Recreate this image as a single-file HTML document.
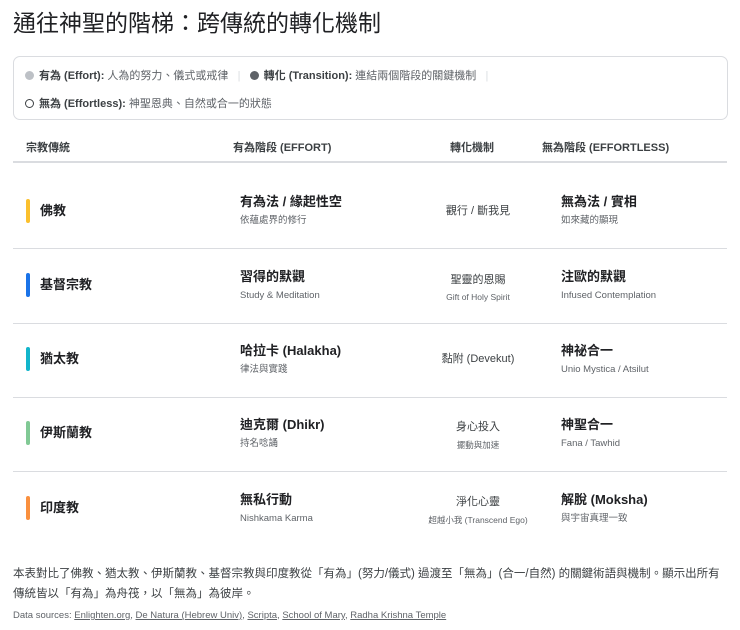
<!DOCTYPE html>
<html><head><meta charset="utf-8"><style>
body{margin:0;width:740px;height:630px;background:#fff;font-family:"Liberation Sans","Noto Sans CJK TC",sans-serif;color:#202124;position:relative;overflow:hidden}
.a{position:absolute;white-space:nowrap}
h1{position:absolute;left:13px;top:4px;margin:0;font-size:23px;font-weight:400;color:#202124;font-family:"Liberation Sans","Noto Sans CJK TC",sans-serif}
.leg{position:absolute;left:13px;top:56px;width:713px;height:62px;border:1px solid #dadce0;border-radius:7px}
.lt{font-size:11px;color:#5f6368}
.lt b{color:#3c4043;font-weight:700}
.dot{display:inline-block;width:9px;height:9px;border-radius:50%;vertical-align:-1px;margin-right:5px}
.hd{font-size:11px;font-weight:700;color:#3c4043;top:139px}
.line{position:absolute;left:13px;width:714px;height:1px;background:#dadce0}
.bar{position:absolute;left:26px;width:4px;height:24px;border-radius:2px}
.nm{font-size:13px;font-weight:700;left:40px;line-height:16px}
.mn{font-size:13px;font-weight:700;color:#202124;line-height:16px}
.sb{font-size:9.5px;color:#5f6368;line-height:12px}
.tr{font-size:11px;color:#3c4043;text-align:center;width:120px;left:418px;line-height:14px}
.ts{font-size:8.5px;color:#5f6368;text-align:center;width:160px;left:398px;line-height:11px}
</style></head><body>
<h1>通往神聖的階梯：跨傳統的轉化機制</h1>
<div class="leg">
<div class="a lt" style="left:11px;top:10px"><span class="dot" style="background:#bdc1c6"></span><b>有為 (Effort):</b> 人為的努力、儀式或戒律 &nbsp;&nbsp;<span style="color:#dadce0">|</span>&nbsp;&nbsp; <span class="dot" style="background:#5f6368"></span><b>轉化 (Transition):</b> 連結兩個階段的關鍵機制 &nbsp;&nbsp;<span style="color:#dadce0">|</span></div>
<div class="a lt" style="left:11px;top:38px"><span class="dot" style="border:1.5px solid #3c4043;width:7px;height:7px"></span><b>無為 (Effortless):</b> 神聖恩典、自然或合一的狀態</div>
</div>
<div class="a hd" style="left:26px">宗教傳統</div>
<div class="a hd" style="left:233px">有為階段 (EFFORT)</div>
<div class="a hd" style="left:450px">轉化機制</div>
<div class="a hd" style="left:542px">無為階段 (EFFORTLESS)</div>
<div class="line" style="top:161px;height:2px"></div>

<div class="bar" style="top:199px;background:#fbc02d"></div>
<div class="a nm" style="top:203px">佛教</div>
<div class="a mn" style="left:240px;top:194px">有為法 / 緣起性空</div>
<div class="a sb" style="left:240px;top:215px">依蘊處界的修行</div>
<div class="a tr" style="top:204px">觀行 / 斷我見</div>
<div class="a mn" style="left:561px;top:194px">無為法 / 實相</div>
<div class="a sb" style="left:561px;top:215px">如來藏的顯現</div>
<div class="line" style="top:248px"></div>

<div class="bar" style="top:273px;background:#1a73e8"></div>
<div class="a nm" style="top:277px">基督宗教</div>
<div class="a mn" style="left:240px;top:269px">習得的默觀</div>
<div class="a sb" style="left:240px;top:290px">Study &amp; Meditation</div>
<div class="a tr" style="top:273px">聖靈的恩賜</div>
<div class="a ts" style="top:292px">Gift of Holy Spirit</div>
<div class="a mn" style="left:561px;top:269px">注歐的默觀</div>
<div class="a sb" style="left:561px;top:290px">Infused Contemplation</div>
<div class="line" style="top:323px"></div>

<div class="bar" style="top:347px;background:#12b5cb"></div>
<div class="a nm" style="top:351px">猶太教</div>
<div class="a mn" style="left:240px;top:343px">哈拉卡 (Halakha)</div>
<div class="a sb" style="left:240px;top:364px">律法與實踐</div>
<div class="a tr" style="top:352px">黏附 (Devekut)</div>
<div class="a mn" style="left:561px;top:343px">神祕合一</div>
<div class="a sb" style="left:561px;top:364px">Unio Mystica / Atsilut</div>
<div class="line" style="top:397px"></div>

<div class="bar" style="top:421px;background:#81c995"></div>
<div class="a nm" style="top:425px">伊斯蘭教</div>
<div class="a mn" style="left:240px;top:417px">迪克爾 (Dhikr)</div>
<div class="a sb" style="left:240px;top:438px">持名唸誦</div>
<div class="a tr" style="top:420px">身心投入</div>
<div class="a ts" style="top:440px">擺動與加速</div>
<div class="a mn" style="left:561px;top:417px">神聖合一</div>
<div class="a sb" style="left:561px;top:438px">Fana / Tawhid</div>
<div class="line" style="top:471px"></div>

<div class="bar" style="top:496px;background:#fa903e"></div>
<div class="a nm" style="top:500px">印度教</div>
<div class="a mn" style="left:240px;top:492px">無私行動</div>
<div class="a sb" style="left:240px;top:513px">Nishkama Karma</div>
<div class="a tr" style="top:495px">淨化心靈</div>
<div class="a ts" style="top:515px">超越小我 (Transcend Ego)</div>
<div class="a mn" style="left:561px;top:492px">解脫 (Moksha)</div>
<div class="a sb" style="left:561px;top:513px">與宇宙真理一致</div>

<div class="a" style="left:13px;top:564px;font-size:11.5px;color:#3c4043;line-height:20px;white-space:normal;width:715px">本表對比了佛教、猶太教、伊斯蘭教、基督宗教與印度教從「有為」(努力/儀式) 過渡至「無為」(合一/自然) 的關鍵術語與機制。顯示出所有傳統皆以「有為」為舟筏，以「無為」為彼岸。</div>
<div class="a" style="left:13px;top:610px;font-size:9.5px;color:#5f6368">Data sources: <u>Enlighten.org</u>, <u>De Natura (Hebrew Univ)</u>, <u>Scripta</u>, <u>School of Mary</u>, <u>Radha Krishna Temple</u></div>
</body></html>
